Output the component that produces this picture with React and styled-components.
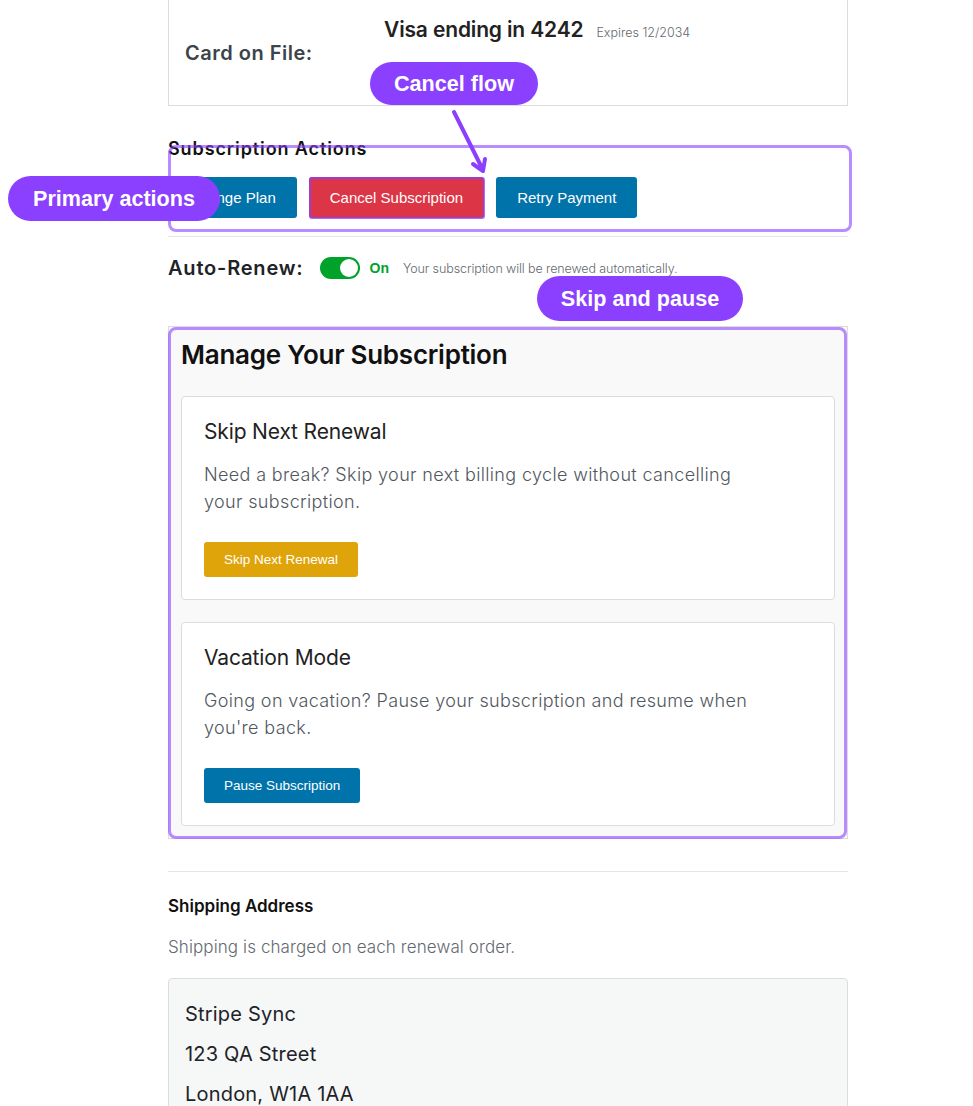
import React from "react";
import styled, { createGlobalStyle } from "styled-components";

const Global = createGlobalStyle`
  html, body { margin: 0; padding: 0; background: #fff; }
  body { font-family: Inter, "Noto Sans", sans-serif; color: #1d2327; }
  * { box-sizing: border-box; }
`;

const Page = styled.div`
  position: relative;
  width: 973px;
  min-height: 1106px;
  overflow: hidden;
  padding-left: 168px;
`;

const Column = styled.div`
  width: 680px;
  display: flex;
  flex-direction: column;
`;

const CardOnFile = styled.div`
  height: 106px;
  border: 1px solid #dcdcde;
  border-top: none;
  display: grid;
  grid-template-columns: 199px 1fr;
  padding-left: 16px;
`;

const FileLabel = styled.div`
  align-self: center;
  font-size: 20px;
  font-weight: 600;
  color: #3c434a;
  letter-spacing: 0.5px;
`;

const FileValue = styled.div`
  padding-top: 15px;
  display: flex;
  align-items: baseline;
  gap: 13px;
`;

const CardNumber = styled.span`
  font-size: 21px;
  font-weight: 600;
  color: #222;
  letter-spacing: -0.15px;
  line-height: 30px;
`;

const Expires = styled.span`
  font-size: 12.5px;
  color: #646970;
  font-weight: 300;
`;

const ActionsSection = styled.div`
  margin-top: 32px;
  padding-bottom: 18px;
  border-bottom: 1px solid #e5e5e5;
`;

const SectionTitle = styled.h3`
  margin: 0;
  font-size: ${(p) => p.$size || 18}px;
  line-height: 22px;
  font-weight: 600;
  color: #111;
  letter-spacing: ${(p) => p.$ls ?? 0}px;
`;

const ButtonRow = styled.div`
  margin-top: 17px;
  display: flex;
  gap: 12px;
`;

const Button = styled.button`
  border: none;
  border-radius: 3px;
  font-family: "Liberation Sans", Arial, sans-serif;
  font-size: ${(p) => (p.$small ? 13.5 : 15)}px;
  color: #fff;
  height: ${(p) => (p.$small ? 35 : 41)}px;
  padding: 0 ${(p) => (p.$small ? 20 : 21)}px;
  background: ${(p) =>
    p.$variant === "danger" ? "#dc3545" : p.$variant === "warning" ? "#e0a40b" : "#0073aa"};
  cursor: pointer;
`;

const AutoRenewRow = styled.div`
  margin-top: 19px;
  height: 24px;
  display: flex;
  align-items: center;
`;

const AutoLabel = styled.span`
  font-size: 20px;
  font-weight: 600;
  color: #1d2327;
  margin-right: 16px;
  letter-spacing: 0.8px;
`;

const Toggle = styled.span`
  width: 40px;
  height: 22px;
  border-radius: 11px;
  background: #00a32a;
  display: flex;
  align-items: center;
  justify-content: flex-end;
  padding: 2px;
  margin-right: 10px;
`;

const Knob = styled.span`
  width: 18px;
  height: 18px;
  border-radius: 50%;
  background: #fff;
`;

const OnText = styled.span`
  font-family: "Liberation Sans", Arial, sans-serif;
  font-weight: 700;
  font-size: 14px;
  color: #00a32a;
  margin-right: 14px;
`;

const Hint = styled.span`
  font-size: 12.5px;
  color: #646970;
  font-weight: 300;
  letter-spacing: -0.1px;
`;

const ManageBox = styled.div`
  margin-top: 46px;
  background: #f9f9f9;
  border: 1px solid #dcdcde;
  padding: 12px;
  display: flex;
  flex-direction: column;
  gap: 22px;
`;

const ManageTitle = styled.h2`
  margin: 0 0 3px;
  font-size: 26px;
  line-height: 32px;
  font-weight: 600;
  color: #111;
  letter-spacing: -0.25px;
`;

const OptionCard = styled.div`
  background: #fff;
  border: 1px solid #dcdcde;
  border-radius: 4px;
  padding: 21px 22px 22px;
`;

const OptionTitle = styled.h4`
  margin: 0;
  font-size: 21px;
  line-height: 28px;
  font-weight: 400;
  color: #222;
  letter-spacing: -0.15px;
`;

const OptionText = styled.p`
  margin: 15px 0 0;
  max-width: 560px;
  font-size: 18px;
  line-height: 27px;
  font-weight: 300;
  color: #50575e;
  letter-spacing: 0.35px;
`;

const OptionAction = styled.div`
  margin-top: 27px;
  display: flex;
`;

const Divider = styled.hr`
  margin: 32px 0 0;
  border: none;
  border-top: 1px solid #e5e5e5;
`;

const ShippingSection = styled.div`
  padding-top: 23px;
`;

const ShippingNote = styled.p`
  margin: 18px 0 0;
  font-size: 17px;
  line-height: 24px;
  font-weight: 300;
  color: #646970;
  letter-spacing: 0.1px;
`;

const AddressBox = styled.div`
  margin-top: 19px;
  background: #f6f7f7;
  border: 1px solid #dcdcde;
  border-radius: 4px;
  padding: 15px 16px 20px;
  font-size: 20px;
  line-height: 40px;
  font-weight: 400;
  color: #1d2327;
  letter-spacing: 0.2px;
`;

/* annotation overlays */
const Pill = styled.div`
  position: absolute;
  left: ${(p) => p.$x}px;
  top: ${(p) => p.$y}px;
  width: ${(p) => p.$w}px;
  height: ${(p) => p.$h}px;
  border-radius: 999px;
  background: #8b40ff;
  color: #fff;
  font-family: "Liberation Sans", Arial, sans-serif;
  font-weight: 700;
  font-size: 21.6px;
  display: flex;
  align-items: center;
  justify-content: center;
  z-index: 3;
`;

const Highlight = styled.div`
  position: absolute;
  left: ${(p) => p.$x}px;
  top: ${(p) => p.$y}px;
  width: ${(p) => p.$w}px;
  height: ${(p) => p.$h}px;
  border: ${(p) => p.$t || 3}px solid rgba(139, 64, 255, ${(p) => p.$o || 0.6});
  border-radius: ${(p) => p.$r || 8}px;
  pointer-events: none;
  z-index: 2;
`;

const ArrowSvg = styled.svg`
  position: absolute;
  left: 440px;
  top: 100px;
  z-index: 3;
  overflow: visible;
`;

export default function App() {
  return (
    <>
      <Global />
      <Page>
        <Column>
          <CardOnFile>
            <FileLabel>Card on File:</FileLabel>
            <FileValue>
              <CardNumber>Visa ending in 4242</CardNumber>
              <Expires>Expires 12/2034</Expires>
            </FileValue>
          </CardOnFile>

          <ActionsSection>
            <SectionTitle $ls={0.9}>Subscription Actions</SectionTitle>
            <ButtonRow>
              <Button>Change Plan</Button>
              <Button $variant="danger">Cancel Subscription</Button>
              <Button>Retry Payment</Button>
            </ButtonRow>
          </ActionsSection>

          <AutoRenewRow>
            <AutoLabel>Auto-Renew:</AutoLabel>
            <Toggle>
              <Knob />
            </Toggle>
            <OnText>On</OnText>
            <Hint>Your subscription will be renewed automatically.</Hint>
          </AutoRenewRow>

          <ManageBox>
            <ManageTitle>Manage Your Subscription</ManageTitle>
            <OptionCard>
              <OptionTitle>Skip Next Renewal</OptionTitle>
              <OptionText>
                Need a break? Skip your next billing cycle without cancelling your subscription.
              </OptionText>
              <OptionAction>
                <Button $small $variant="warning">Skip Next Renewal</Button>
              </OptionAction>
            </OptionCard>
            <OptionCard>
              <OptionTitle>Vacation Mode</OptionTitle>
              <OptionText>
                Going on vacation? Pause your subscription and resume when you're back.
              </OptionText>
              <OptionAction>
                <Button $small>Pause Subscription</Button>
              </OptionAction>
            </OptionCard>
          </ManageBox>

          <Divider />

          <ShippingSection>
            <SectionTitle $size={17}>Shipping Address</SectionTitle>
            <ShippingNote>Shipping is charged on each renewal order.</ShippingNote>
            <AddressBox>
              Stripe Sync
              <br />
              123 QA Street
              <br />
              London, W1A 1AA
            </AddressBox>
          </ShippingSection>
        </Column>

        <Highlight $x={168} $y={145} $w={684} $h={87} />
        <Highlight $x={309} $y={177} $w={176} $h={42} $t={2} $r={3} $o={0.75} />
        <Highlight $x={168} $y={327} $w={679} $h={512} />

        <Pill $x={370} $y={62} $w={168} $h={43}>Cancel flow</Pill>
        <ArrowSvg width="60" height="80" viewBox="0 0 60 80">
          <path
            d="M14 12 L43 70"
            stroke="#8b40ff"
            strokeWidth="4"
            strokeLinecap="round"
            fill="none"
          />
          <path
            d="M33 64 L43 71 L45 59"
            stroke="#8b40ff"
            strokeWidth="4"
            strokeLinecap="round"
            strokeLinejoin="round"
            fill="none"
          />
        </ArrowSvg>
        <Pill $x={8} $y={176} $w={212} $h={45}>Primary actions</Pill>
        <Pill $x={537} $y={276} $w={206} $h={45}>Skip and pause</Pill>
      </Page>
    </>
  );
}
